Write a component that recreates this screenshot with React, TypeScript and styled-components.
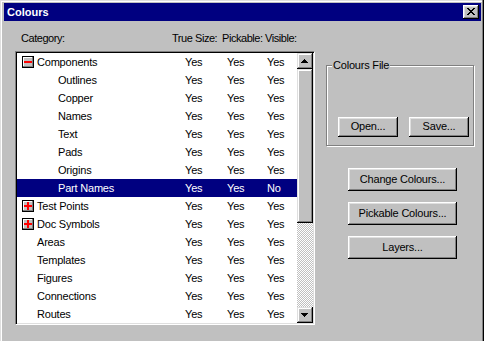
import React from "react";
import styled, { createGlobalStyle } from "styled-components";

const GlobalStyle = createGlobalStyle`
  html, body { margin: 0; padding: 0; background: #c0c0c0; }
  body {
    font-family: "Liberation Sans", Arial, sans-serif;
    font-size: 11px;
    letter-spacing: -0.2px;
    color: #000;
  }
  * { box-sizing: border-box; }
`;

const Window = styled.div`
  width: 484px;
  height: 341px;
  overflow: hidden;
  background: #c0c0c0;
  padding: 3px 3px 0 4px;
  box-shadow: inset -1px 0 0 #000, inset -2px 0 0 #808080,
    inset 1px 1px 0 #dfdfdf, inset 2px 2px 0 #fff;
`;

const TitleBar = styled.div`
  height: 18px;
  background: #000080;
  display: flex;
  align-items: center;
  justify-content: space-between;
  padding: 0 2px 0 3px;
`;

const TitleText = styled.span`
  color: #fff;
  font-weight: bold;
  font-size: 11px;
  letter-spacing: 0;
  line-height: 13px;
`;

const CloseButton = styled.div`
  width: 16px;
  height: 14px;
  background: #c0c0c0;
  display: flex;
  align-items: center;
  justify-content: center;
  padding: 0 1px 1px 0;
  box-shadow: inset -1px -1px 0 #000, inset 1px 1px 0 #fff,
    inset -2px -2px 0 #808080, inset 2px 2px 0 #dfdfdf;
`;

const Client = styled.div`
  display: flex;
  padding-left: 11px;
`;

const LeftColumn = styled.div`
  width: 300px;
  display: flex;
  flex-direction: column;
`;

const Header = styled.div`
  display: grid;
  grid-template-columns: 157px 50px 43px 1fr;
  height: 30px;
  padding-top: 11px;
  line-height: 13px;
  white-space: nowrap;
  letter-spacing: -0.45px;
`;

const HeaderCell = styled.span<{ $pad?: number }>`
  padding-left: ${(p) => p.$pad ?? 0}px;
`;

const ListBox = styled.div`
  width: 300px;
  height: 274px;
  background: #fff;
  border: 1px solid;
  border-color: #808080 #fff #fff #808080;
  padding: 1px;
  box-shadow: inset 1px 1px 0 #000, inset -1px -1px 0 #dfdfdf;
  display: flex;
`;

const Rows = styled.div`
  flex: 1;
  display: flex;
  flex-direction: column;
`;

const Row = styled.div<{ $selected?: boolean }>`
  height: 18px;
  flex: none;
  display: grid;
  grid-template-columns: 168px 42px 40px 1fr;
  align-items: center;
  line-height: 13px;
  white-space: nowrap;
  background: ${(p) => (p.$selected ? "#000080" : "transparent")};
  color: ${(p) => (p.$selected ? "#fff" : "#000")};
`;

const NameCell = styled.div<{ $indent: number }>`
  display: flex;
  align-items: center;
  gap: 3px;
  padding-left: ${(p) => p.$indent}px;
`;

const ScrollBar = styled.div`
  width: 16px;
  display: flex;
  flex-direction: column;
`;

const Raised = styled.div`
  background: #c0c0c0;
  box-shadow: inset -1px -1px 0 #000, inset 1px 1px 0 #dfdfdf,
    inset -2px -2px 0 #808080, inset 2px 2px 0 #fff;
`;

const ScrollButton = styled(Raised)`
  width: 16px;
  height: 16px;
  flex: none;
  display: flex;
  align-items: center;
  justify-content: center;
  padding: 0 1px 1px 0;
`;

const Thumb = styled(Raised)`
  height: 154px;
  flex: none;
`;

const Track = styled.div`
  flex: 1;
  background: repeating-conic-gradient(#c0c0c0 0 25%, #ffffff 0 50%) 0 0 / 2px 2px;
`;

const RightColumn = styled.div`
  margin-left: 11px;
  padding-top: 44px;
  width: 148px;
  display: flex;
  flex-direction: column;
`;

const GroupBox = styled.div`
  position: relative;
  height: 81px;
  border: 1px solid #808080;
  box-shadow: inset 1px 1px 0 #fff, 1px 1px 0 #fff;
  display: flex;
  align-items: flex-end;
  gap: 11px;
  padding: 0 0 8px 11px;
`;

const GroupLabel = styled.span`
  position: absolute;
  top: -7px;
  left: 5px;
  padding: 0 1px;
  background: #c0c0c0;
  line-height: 13px;
  white-space: nowrap;
`;

const PushButton = styled(Raised).attrs({ as: "button" })<{ $w: number; $h: number }>`
  width: ${(p) => p.$w}px;
  height: ${(p) => p.$h}px;
  border: none;
  padding: 0 0 1px 0;
  font-family: "Liberation Sans", Arial, sans-serif;
  font-size: 11px;
  letter-spacing: -0.2px;
  line-height: 13px;
  color: #000;
  display: flex;
  align-items: center;
  justify-content: center;
  white-space: nowrap;
  box-shadow: inset -1px -1px 0 #000, inset 1px 1px 0 #fff,
    inset -2px -2px 0 #808080, inset 2px 2px 0 #dfdfdf;
`;

const ButtonStack = styled.div`
  display: flex;
  flex-direction: column;
  gap: 11px;
  margin-top: 22px;
  padding-left: 22px;
`;

const ExpandIcon = ({ open }: { open: boolean }) => (
  <svg width="12" height="12" viewBox="0 0 12 12" shapeRendering="crispEdges">
    <rect x="0" y="0" width="12" height="12" fill="#000" />
    <rect x="1" y="1" width="10" height="10" fill="#808080" />
    <rect x="1" y="1" width="9" height="9" fill="#fff" />
    <rect x="2" y="2" width="8" height="8" fill="#c0c0c0" />
    <rect x="2" y="5" width="8" height="2" fill="#ff0000" />
    {!open && <rect x="5" y="2" width="2" height="8" fill="#ff0000" />}
  </svg>
);

const Arrow = ({ down }: { down?: boolean }) => (
  <svg width="7" height="4" viewBox="0 0 7 4" shapeRendering="crispEdges">
    {down ? (
      <path d="M0 0h7v1H0zM1 1h5v1H1zM2 2h3v1H2zM3 3h1v1H3z" fill="#000" />
    ) : (
      <path d="M3 0h1v1H3zM2 1h3v1H2zM1 2h5v1H1zM0 3h7v1H0z" fill="#000" />
    )}
  </svg>
);

const CloseGlyph = () => (
  <svg width="8" height="7" viewBox="0 0 8 7" shapeRendering="crispEdges">
    <path
      d="M0 0h2v1h1v1h2V1h1V0h2v1H7v1H6v1H5v1h1v1h1v1h1v1H6V6H5V5H3v1H2v1H0V6h1V5h1V4h1V3H2V2H1V1H0z"
      fill="#000"
    />
  </svg>
);

type Item = {
  name: string;
  level: 0 | 1;
  expand?: "open" | "closed";
  vals: [string, string, string];
  selected?: boolean;
};

const Y: [string, string, string] = ["Yes", "Yes", "Yes"];

const items: Item[] = [
  { name: "Components", level: 0, expand: "open", vals: Y },
  { name: "Outlines", level: 1, vals: Y },
  { name: "Copper", level: 1, vals: Y },
  { name: "Names", level: 1, vals: Y },
  { name: "Text", level: 1, vals: Y },
  { name: "Pads", level: 1, vals: Y },
  { name: "Origins", level: 1, vals: Y },
  { name: "Part Names", level: 1, vals: ["Yes", "Yes", "No"], selected: true },
  { name: "Test Points", level: 0, expand: "closed", vals: Y },
  { name: "Doc Symbols", level: 0, expand: "closed", vals: Y },
  { name: "Areas", level: 0, vals: Y },
  { name: "Templates", level: 0, vals: Y },
  { name: "Figures", level: 0, vals: Y },
  { name: "Connections", level: 0, vals: Y },
  { name: "Routes", level: 0, vals: Y },
];

export default function App() {
  return (
    <>
      <GlobalStyle />
      <Window>
        <TitleBar>
          <TitleText>Colours</TitleText>
          <CloseButton>
            <CloseGlyph />
          </CloseButton>
        </TitleBar>
        <Client>
          <LeftColumn>
            <Header>
              <HeaderCell $pad={6}>Category:</HeaderCell>
              <HeaderCell>True Size:</HeaderCell>
              <HeaderCell>Pickable:</HeaderCell>
              <HeaderCell>Visible:</HeaderCell>
            </Header>
            <ListBox>
              <Rows>
                {items.map((it) => (
                  <Row key={it.name} $selected={it.selected}>
                    <NameCell $indent={it.level === 1 ? 41 : it.expand ? 5 : 20}>
                      {it.expand && <ExpandIcon open={it.expand === "open"} />}
                      <span>{it.name}</span>
                    </NameCell>
                    <span>{it.vals[0]}</span>
                    <span>{it.vals[1]}</span>
                    <span>{it.vals[2]}</span>
                  </Row>
                ))}
              </Rows>
              <ScrollBar>
                <ScrollButton>
                  <Arrow />
                </ScrollButton>
                <Thumb />
                <Track />
                <ScrollButton>
                  <Arrow down />
                </ScrollButton>
              </ScrollBar>
            </ListBox>
          </LeftColumn>
          <RightColumn>
            <GroupBox>
              <GroupLabel>Colours File</GroupLabel>
              <PushButton $w={60} $h={20}>Open...</PushButton>
              <PushButton $w={60} $h={20}>Save...</PushButton>
            </GroupBox>
            <ButtonStack>
              <PushButton $w={109} $h={23}>Change Colours...</PushButton>
              <PushButton $w={109} $h={23}>Pickable Colours...</PushButton>
              <PushButton $w={109} $h={23}>Layers...</PushButton>
            </ButtonStack>
          </RightColumn>
        </Client>
      </Window>
    </>
  );
}
